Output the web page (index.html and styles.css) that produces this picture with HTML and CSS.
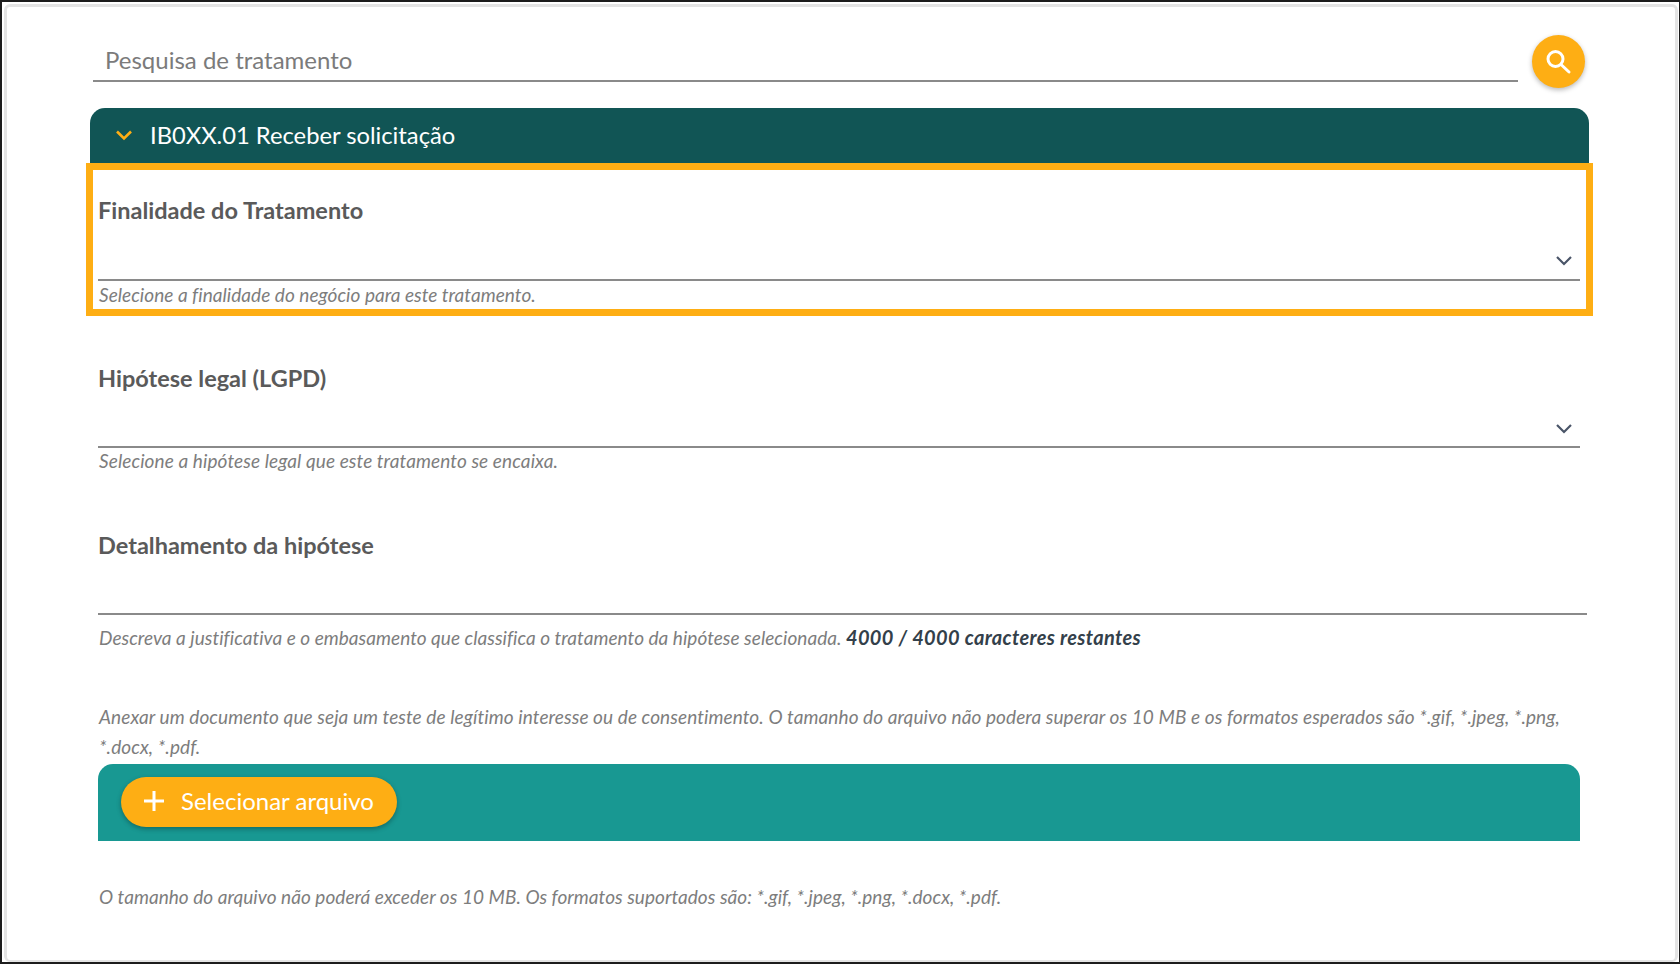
FILE: index.html
```html
<!DOCTYPE html>
<html lang="pt-BR">

<head>
    <meta charset="UTF-8">
    <meta name="viewport" content="width=device-width, initial-scale=1.0">
    <title>Pesquisa de tratamento</title>
    <link rel="stylesheet" href="styles.css">
</head>

<body>
    <div class="frame">
        <main class="card">
            <div class="search-row">
                <div class="search-input">Pesquisa de tratamento</div>
                <button class="search-button" type="button" aria-label="Pesquisar">
                    <svg width="30" height="30" viewBox="0 0 30 30" fill="none" stroke="#fff" stroke-width="3">
                        <circle cx="11.5" cy="12" r="7.5"></circle>
                        <path d="M17 17.5l8 7.5" stroke-linecap="round"></path>
                    </svg>
                </button>
            </div>

            <div class="accordion-header">
                <svg class="accordion-chevron" width="18" height="12" viewBox="0 0 18 12" fill="none" stroke="#feae14" stroke-width="2.6">
                    <path d="M2 2.5l7 7 7-7"></path>
                </svg>
                <span>IB0XX.01 Receber solicitação</span>
            </div>

            <div class="accordion-body">
                <section class="highlight">
                    <div class="field-label">Finalidade do Tratamento</div>
                    <div class="select-line">
                        <svg width="18" height="11" viewBox="0 0 18 11" fill="none" stroke="#4a5568" stroke-width="2.2">
                            <path d="M2 2l7 7 7-7"></path>
                        </svg>
                    </div>
                    <div class="hint">Selecione a finalidade do negócio para este tratamento.</div>
                </section>

                <section class="field-second">
                    <div class="field-label">Hipótese legal (LGPD)</div>
                    <div class="select-line">
                        <svg width="18" height="11" viewBox="0 0 18 11" fill="none" stroke="#4a5568" stroke-width="2.2">
                            <path d="M2 2l7 7 7-7"></path>
                        </svg>
                    </div>
                    <div class="hint hint-wide">Selecione a hipótese legal que este tratamento se encaixa.</div>
                </section>

                <section class="field-third">
                    <div class="field-label">Detalhamento da hipótese</div>
                    <div class="text-line"></div>
                    <div class="hint hint-spaced">Descreva a justificativa e o embasamento que classifica o tratamento da hipótese selecionada. <strong>4000 / 4000 caracteres restantes</strong></div>
                </section>

                <p class="attach-note">Anexar um documento que seja um teste de legítimo interesse ou de consentimento. O tamanho do arquivo não podera superar os 10 MB e os formatos esperados são *.gif, *.jpeg, *.png, *.docx, *.pdf.</p>

                <div class="upload-bar">
                    <button class="upload-button" type="button">
                        <svg width="22" height="22" viewBox="0 0 22 22" fill="none" stroke="#fff" stroke-width="3">
                            <path d="M11 1v20M1 11h20"></path>
                        </svg>
                        <span>Selecionar arquivo</span>
                    </button>
                </div>

                <div class="hint hint-last">O tamanho do arquivo não poderá exceder os 10 MB. Os formatos suportados são: *.gif, *.jpeg, *.png, *.docx, *.pdf.</div>
            </div>
        </main>
    </div>
</body>

</html>
```

FILE: styles.css
```css
* {
    box-sizing: border-box;
}

html,
body {
    margin: 0;
    height: 100%;
}

body {
    background: #fff;
    font-family: Lato, "Noto Sans", sans-serif;
    color: #5a5a5a;
}

.frame {
    height: 964px;
    border: solid #1c1c1c;
    border-width: 2px 1px 2px 2px;
    padding: 2px 1px 0 2px;
    overflow: hidden;
}

.card {
    height: 100%;
    border: 3px solid #e4e4e4;
    border-bottom-width: 2px;
    border-radius: 6px;
    padding: 28px 86px 0 83px;
}

.search-row {
    display: flex;
    align-items: flex-start;
    gap: 14px;
    padding: 0 4px 0 3px;
    margin-bottom: 20px;
}

.search-input {
    flex: 1;
    height: 47px;
    padding: 9px 12px 0;
    border-bottom: 2px solid #8a8a8a;
    font-size: 24px;
    line-height: 32px;
    color: #7b7b7b;
}

.search-button {
    width: 53px;
    height: 53px;
    flex: none;
    display: flex;
    align-items: center;
    justify-content: center;
    padding: 0;
    border: none;
    border-radius: 50%;
    background: #feae14;
    box-shadow: 0 2px 5px rgba(0, 0, 0, 0.28);
}

.accordion-header {
    height: 55px;
    display: flex;
    align-items: center;
    gap: 17px;
    padding: 0 0 2px 25px;
    background: #115555;
    border-radius: 15px 15px 0 0;
    color: #fff;
    font-size: 23.75px;
}

.accordion-body {
    padding: 0 9px 0 8px;
}

.highlight {
    height: 153px;
    margin: 0 -13px 0 -12px;
    padding: 25px 6px 0 5px;
    border: 7px solid #feae14;
}

.field-label {
    height: 30px;
    line-height: 30px;
    font-size: 23.5px;
    font-weight: 700;
}

.select-line {
    height: 56px;
    display: flex;
    align-items: flex-end;
    justify-content: flex-end;
    padding: 0 7px 13px 0;
    border-bottom: 2px solid #8a8a8a;
}

.hint {
    height: 28px;
    padding-left: 1px;
    line-height: 28px;
    font-size: 19px;
    letter-spacing: 0.04px;
    font-style: italic;
    color: #7d7d7d;
}

.hint strong {
    font-size: 20px;
    letter-spacing: 0.35px;
    color: #33404a;
}

.field-second {
    margin-top: 47px;
}

.field-second .select-line {
    height: 55px;
    padding-bottom: 12px;
}

.field-second .hint {
    height: 26px;
    line-height: 26px;
}

.hint-wide {
    letter-spacing: 0.1px;
}

.field-third {
    margin-top: 56px;
}

.text-line {
    height: 55px;
    margin-right: -7px;
    border-bottom: 2px solid #8a8a8a;
}

.hint-spaced {
    margin-top: 8px;
}

.attach-note {
    margin: 51px 0 2px;
    padding-left: 1px;
    line-height: 30px;
    font-size: 19px;
    letter-spacing: 0.09px;
    font-style: italic;
    color: #7d7d7d;
}

.upload-bar {
    height: 77px;
    padding: 13px 23px;
    background: #189892;
    border-radius: 15px 15px 0 0;
}

.upload-button {
    width: 276px;
    height: 50px;
    display: flex;
    align-items: center;
    gap: 16px;
    padding: 0 0 2px 22px;
    border: none;
    border-radius: 25px;
    background: #feae14;
    box-shadow: 0 2px 5px rgba(0, 0, 0, 0.3);
    color: #fff;
    font-family: inherit;
    font-size: 24px;
}

.upload-button span {
    margin-bottom: 2px;
}

.hint-last {
    margin-top: 42px;
}
```
